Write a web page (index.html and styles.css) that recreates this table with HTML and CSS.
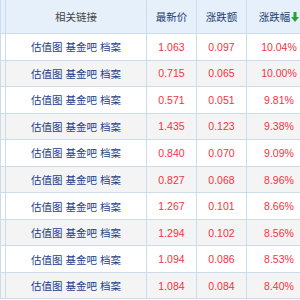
FILE: index.html
```html
<!DOCTYPE html>
<html>
<head>
<meta charset="utf-8">
<link rel="stylesheet" href="styles.css">
</head>
<body>
<div class="wrap">
<table class="grid">
  <colgroup>
    <col class="c0"><col class="c1"><col class="c2"><col class="c3"><col class="c4">
  </colgroup>
  <thead>
    <tr>
      <th></th>
      <th class="plain">相关链接</th>
      <th>最新价</th>
      <th>涨跌额</th>
      <th>涨跌幅<svg class="arrow" width="8" height="10" viewBox="0 0 8 10"><path d="M2.5 0h3v5h2.5L4 10 0 5h2.5z" fill="#2e9e3a"/></svg></th>
    </tr>
  </thead>
  <tbody>
    <tr><td></td><td class="links">估值图 基金吧 档案</td><td class="num">1.063</td><td class="num">0.097</td><td class="num">10.04%</td></tr>
    <tr><td></td><td class="links">估值图 基金吧 档案</td><td class="num">0.715</td><td class="num">0.065</td><td class="num">10.00%</td></tr>
    <tr><td></td><td class="links">估值图 基金吧 档案</td><td class="num">0.571</td><td class="num">0.051</td><td class="num">9.81%</td></tr>
    <tr><td></td><td class="links">估值图 基金吧 档案</td><td class="num">1.435</td><td class="num">0.123</td><td class="num">9.38%</td></tr>
    <tr><td></td><td class="links">估值图 基金吧 档案</td><td class="num">0.840</td><td class="num">0.070</td><td class="num">9.09%</td></tr>
    <tr><td></td><td class="links">估值图 基金吧 档案</td><td class="num">0.827</td><td class="num">0.068</td><td class="num">8.96%</td></tr>
    <tr><td></td><td class="links">估值图 基金吧 档案</td><td class="num">1.267</td><td class="num">0.101</td><td class="num">8.66%</td></tr>
    <tr><td></td><td class="links">估值图 基金吧 档案</td><td class="num">1.294</td><td class="num">0.102</td><td class="num">8.56%</td></tr>
    <tr><td></td><td class="links">估值图 基金吧 档案</td><td class="num">1.094</td><td class="num">0.086</td><td class="num">8.53%</td></tr>
    <tr><td></td><td class="links">估值图 基金吧 档案</td><td class="num">1.084</td><td class="num">0.084</td><td class="num">8.40%</td></tr>
  </tbody>
</table>
</div>
</body>
</html>
```
FILE: styles.css
```css
html, body {
  margin: 0;
  padding: 0;
  background: #ffffff;
}
.wrap {
  width: 300px;
  height: 300px;
  overflow: hidden;
}
.grid {
  border-collapse: collapse;
  table-layout: fixed;
  width: 311px;
  font-family: "Liberation Sans", Arial, "Noto Sans CJK SC", sans-serif;
  font-size: 10.5px;
}
.c0 { width: 5px; }
.c1 { width: 141px; }
.c2 { width: 50px; }
.c3 { width: 50px; }
.c4 { width: 65px; }
.grid th, .grid td {
  border: 1px solid #cddcec;
  padding: 0;
  text-align: center;
  white-space: nowrap;
  overflow: hidden;
}
.grid th {
  height: 33px;
  background: #e6f0fa;
  font-weight: normal;
  color: #233e73;
}
.grid th.plain {
  color: #444444;
}
.grid thead tr th {
  border-top: none;
}
.grid tbody tr {
  height: 26.56px;
}
.grid tbody tr:nth-child(even) td {
  background: #f4f4f4;
}
.grid td.links {
  color: #1d3f8a;
}
.grid td.num {
  color: #f4333f;
}
.arrow {
  vertical-align: -1px;
  margin-left: 1px;
}
```
